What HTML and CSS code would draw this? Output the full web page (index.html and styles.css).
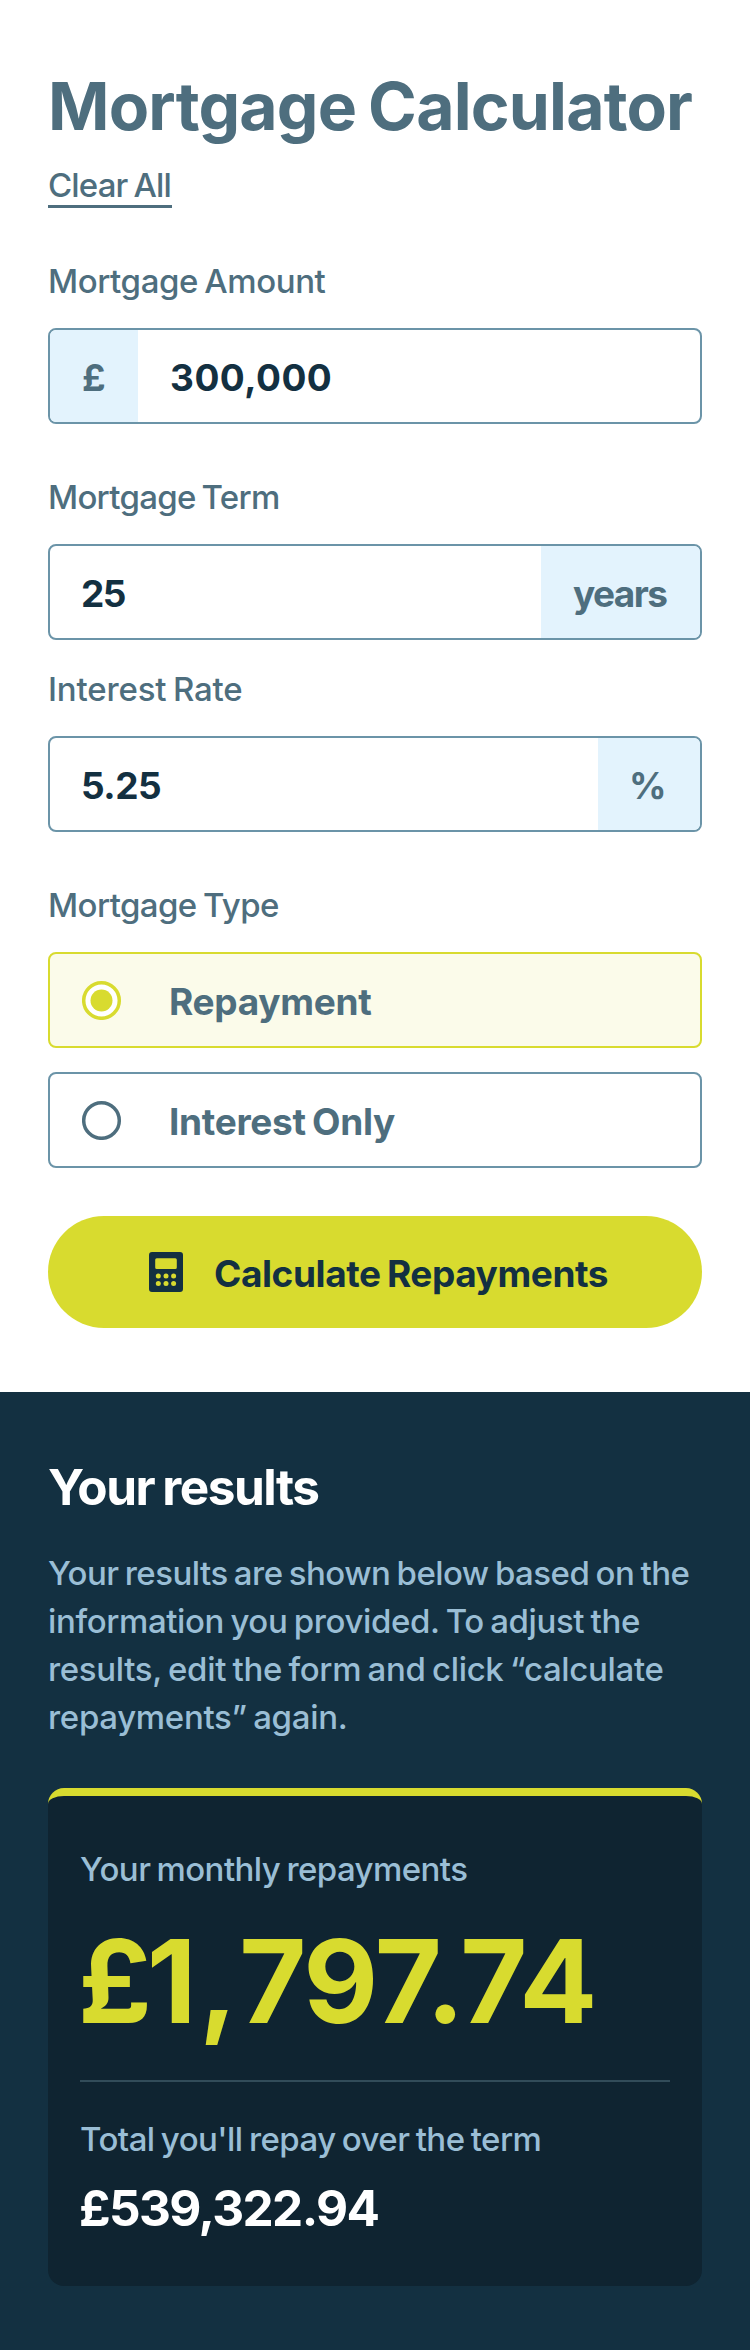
FILE: index.html
```html
<!DOCTYPE html>
<html lang="en">
<head>
<meta charset="utf-8">
<title>Mortgage Calculator</title>
<link rel="stylesheet" href="styles.css">
</head>
<body>
<main class="page">
  <form class="calculator">
    <h1 class="title">Mortgage Calculator</h1>
    <button type="button" class="clear">Clear All</button>

    <div class="field">
      <label class="label label-amount" for="amount">Mortgage Amount</label>
      <div class="control">
        <span class="affix affix-pound">£</span>
        <input class="input input-amount" id="amount" type="text" value="300,000">
      </div>
    </div>

    <div class="field">
      <label class="label label-term" for="term">Mortgage Term</label>
      <div class="control">
        <input class="input input-term" id="term" type="text" value="25">
        <span class="affix affix-years">years</span>
      </div>
    </div>

    <div class="field field-tight">
      <label class="label label-rate" for="rate">Interest Rate</label>
      <div class="control">
        <input class="input input-rate" id="rate" type="text" value="5.25">
        <span class="affix affix-percent">%</span>
      </div>
    </div>

    <div class="field">
      <span class="label label-type">Mortgage Type</span>
      <div class="options">
        <label class="option option-selected">
          <svg class="radio" viewBox="0 0 40 40"><circle cx="19.500" cy="20.500" r="17.800" fill="#fff" stroke="#d8db2f" stroke-width="3.500"/><circle cx="19.500" cy="20.500" r="11" fill="#d8db2f"/></svg>
          <span class="option-text text-repayment">Repayment</span>
        </label>
        <label class="option">
          <svg class="radio" viewBox="0 0 40 40"><circle cx="19.500" cy="20.500" r="17.800" fill="#fff" stroke="#4e6e7e" stroke-width="3.500"/></svg>
          <span class="option-text text-interest">Interest Only</span>
        </label>
      </div>
    </div>

    <button type="button" class="submit">
      <svg class="submit-icon" viewBox="0 0 34 40"><path fill="#133041" fill-rule="evenodd" d="M3 0h28a3 3 0 0 1 3 3v34a3 3 0 0 1-3 3H3a3 3 0 0 1-3-3V3a3 3 0 0 1 3-3ZM7.700 6.200a1.500 1.500 0 0 0-1.500 1.500v7.800a1.500 1.500 0 0 0 1.500 1.500h18.600a1.500 1.500 0 0 0 1.500-1.500V7.700a1.500 1.500 0 0 0-1.500-1.500Z"/><g fill="#d8db2f"><circle cx="9.300" cy="23.900" r="2.500"/><circle cx="17" cy="23.900" r="2.500"/><circle cx="24.600" cy="23.900" r="2.500"/><circle cx="9.300" cy="31.500" r="2.500"/><circle cx="17" cy="31.500" r="2.500"/><circle cx="24.600" cy="31.500" r="2.500"/></g></svg>
      <span class="submit-text">Calculate Repayments</span>
    </button>
  </form>

  <section class="results">
    <h2 class="results-title">Your results</h2>
    <p class="intro"><span class="line-1">Your results are shown below based on the</span><br><span class="line-2">information you provided. To adjust the</span><br><span class="line-3">results, edit the form and click “calculate</span><br><span class="line-4">repayments” again.</span></p>
    <div class="card">
      <p class="card-label label-monthly">Your monthly repayments</p>
      <p class="monthly"><span class="kern-pound">£</span><span class="kern-one">1</span><span class="kern-comma">,</span><span class="kern-seven">7</span>97.74</p>
      <hr class="rule">
      <p class="card-label label-total">Total you'll repay over the term</p>
      <p class="total">£539,322.94</p>
    </div>
  </section>
</main>
</body>
</html>
```
FILE: styles.css
```css
*, *::before, *::after { box-sizing: border-box; margin: 0; }

body { font-family: Inter, sans-serif; color: #4e6e7e; background: #fff; }
button, input { font-family: inherit; color: inherit; border: 0; background: none; padding: 0; }

.page { display: flex; flex-direction: column; width: 750px; min-height: 2350px; }

.calculator { display: flex; flex-direction: column; height: 1392px; padding: 66px 48px 64px; }
.title { font-size: 66px; font-weight: 700; line-height: 80px; letter-spacing: -0.8px; word-spacing: -3px; white-space: nowrap; }
.clear { align-self: flex-start; width: 124px; height: 43px; margin: 19px 0 49px; padding-left: 0; border-bottom: 3px solid #4e6e7e; font-size: 33px; font-weight: 500; line-height: 40px; letter-spacing: -0.85px; word-spacing: -2px; text-align: left; white-space: nowrap; }

.field { display: flex; flex-direction: column; gap: 23px; margin-bottom: 49px; }
.field-tight { margin-top: -24px; }
.label { font-size: 33px; font-weight: 500; line-height: 48px; word-spacing: -2px; }
.label-amount { letter-spacing: -0.42px; }
.label-term { letter-spacing: -0.72px; }
.label-rate { letter-spacing: -0.17px; }
.label-type { letter-spacing: -0.58px; }

.control { display: flex; height: 96px; border: 2px solid #6b94a8; border-radius: 8px; overflow: hidden; font-size: 37px; font-weight: 700; line-height: 44px; }
.affix { flex: none; padding: 26px 0 0 32px; background: #e3f3fd; }
.affix-pound { width: 88px; }
.affix-years { width: 159px; letter-spacing: -1.6px; }
.affix-percent { width: 102px; padding-left: 31px; }
.input { flex: 1; min-width: 0; padding: 3px 32px 0; color: #133041; font-size: 37px; font-weight: 700; }
.input-amount { letter-spacing: 0.5px; }
.input-term { padding-left: 31px; letter-spacing: -1.5px; }
.input-rate { padding-left: 31px; letter-spacing: -0.5px; }

.options { display: flex; flex-direction: column; gap: 24px; }
.option { display: flex; align-items: center; gap: 47px; height: 96px; padding-left: 32px; border: 2px solid #6b94a8; border-radius: 8px; font-size: 37px; font-weight: 700; }
.option-selected { border-color: #d8db2f; background: #fbfbea; }
.radio { width: 40px; height: 40px; flex: none; }
.option-text { padding-top: 3px; line-height: 44px; }
.text-repayment { letter-spacing: -0.3px; }
.text-interest { letter-spacing: -0.31px; word-spacing: -2px; }

.submit { display: flex; align-items: center; gap: 31px; height: 112px; margin-top: -1px; padding-left: 101px; flex: none; border-radius: 56px; background: #d8db2f; color: #133041; font-size: 37px; font-weight: 700; white-space: nowrap; }
.submit-icon { width: 34px; height: 40px; flex: none; }
.submit-text { padding-top: 3px; line-height: 44px; letter-spacing: -0.43px; word-spacing: -2px; }

.results { flex: 1; padding: 63px 48px 64px; background: #133041; }
.results-title { color: #fff; font-size: 49.5px; font-weight: 700; line-height: 64px; letter-spacing: -1.5px; word-spacing: -2px; }
.intro { margin-top: 30px; color: #9abed5; font-size: 33px; font-weight: 500; line-height: 48px; word-spacing: -2px; white-space: nowrap; }
.line-1 { letter-spacing: -0.54px; }
.line-2 { letter-spacing: -0.39px; }
.line-3 { letter-spacing: -0.34px; }
.line-4 { letter-spacing: -0.32px; }

.card { height: 498px; margin-top: 47px; padding: 49px 32px 0; border-top: 8px solid #d8db2f; border-radius: 16px; background: #0f2431; }
.card-label { color: #9abed5; font-size: 33px; font-weight: 500; line-height: 48px; word-spacing: -2px; }
.label-monthly { letter-spacing: -0.58px; }
.label-total { letter-spacing: -0.55px; }
.monthly { margin: 18px 0 0 -2px; color: #d8db2f; font-size: 115.5px; font-weight: 700; line-height: 140px; letter-spacing: -1.4px; white-space: nowrap; }
.kern-pound { letter-spacing: -5px; }
.kern-one { letter-spacing: 2.5px; }
.kern-comma { letter-spacing: 1.5px; }
.kern-seven { letter-spacing: -3px; }
.rule { height: 2px; margin: 29px 0 33px; border: 0; background: #324c59; }
.total { margin: 15px 0 0 -1px; color: #fff; font-size: 49.5px; font-weight: 700; line-height: 60px; letter-spacing: -1.62px; }
```
